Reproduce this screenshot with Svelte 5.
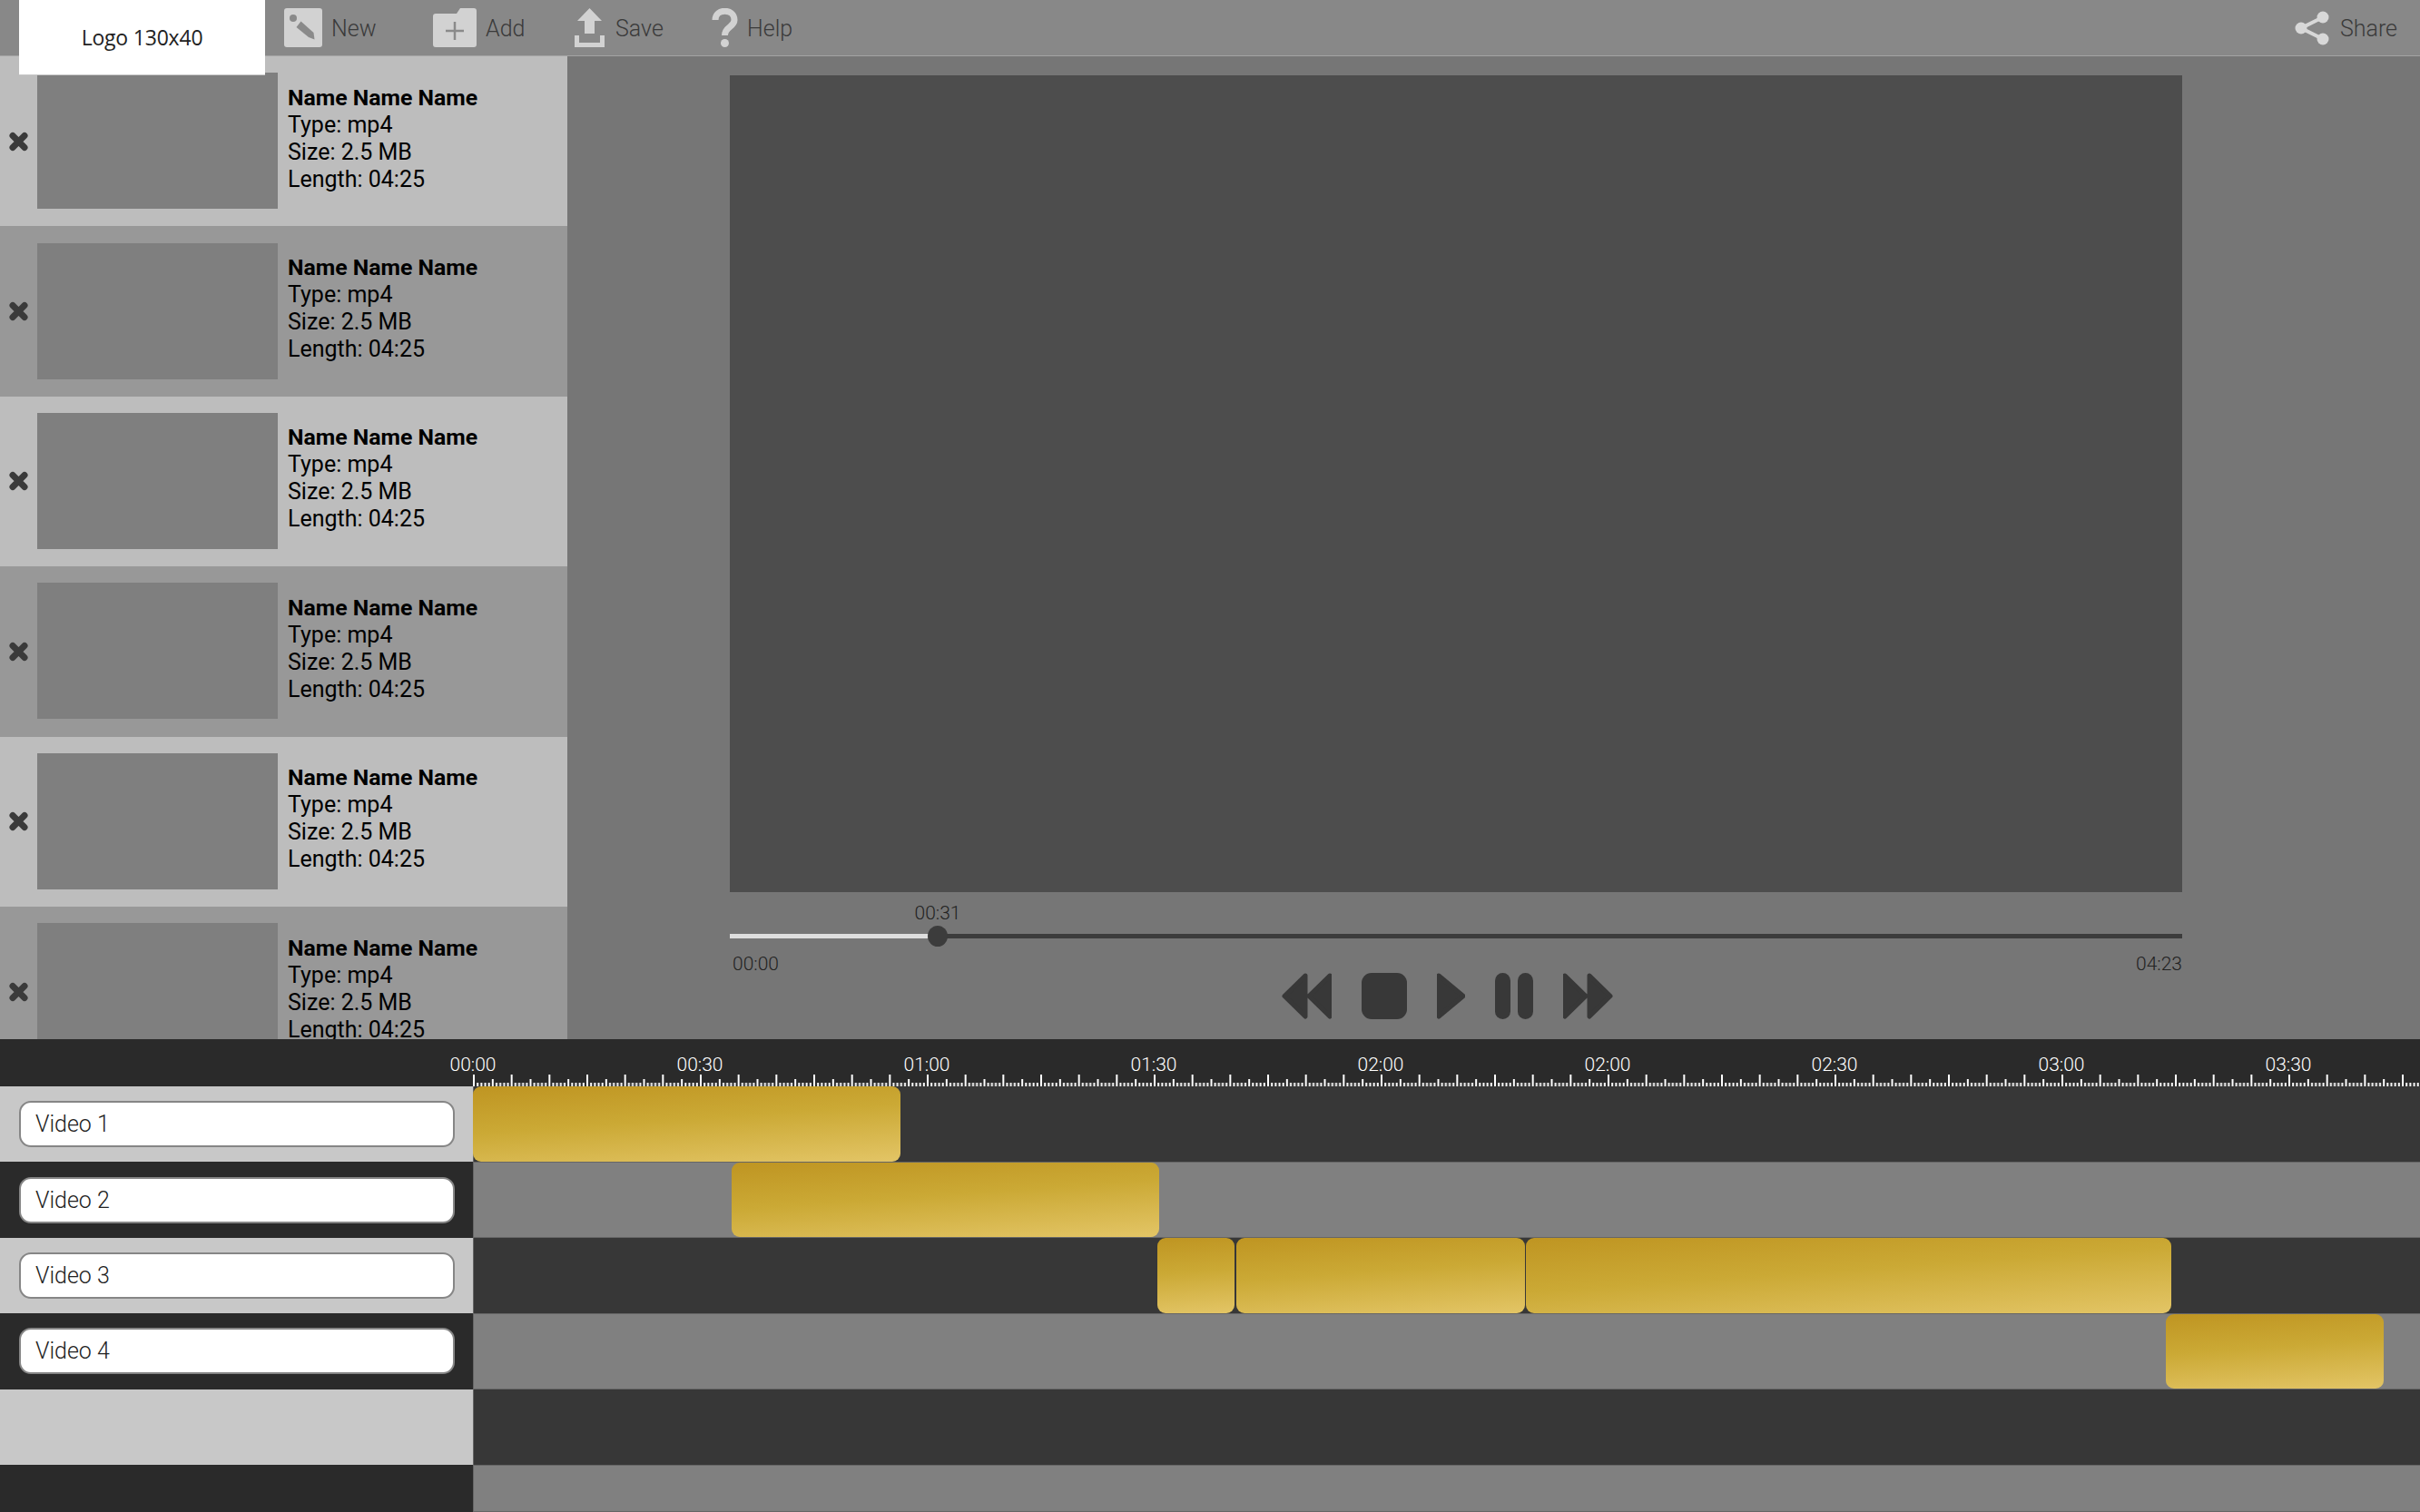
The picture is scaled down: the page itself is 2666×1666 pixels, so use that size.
<script>
  const files = Array.from({ length: 6 }, (_, i) => i);
  const tracks = [
    { name: 'Video 1', clips: [[-1, 471]] },
    { name: 'Video 2', clips: [[284, 471]] },
    { name: 'Video 3', clips: [[753, 85], [840, 318], [1159, 711]] },
    { name: 'Video 4', clips: [[1864, 240]] },
    { name: '', clips: [] },
    { name: null, clips: [] }
  ];
  const labels = ['00:00', '00:30', '01:00', '01:30', '02:00', '02:00', '02:30', '03:00', '03:30'];
  const minor = Array.from({ length: 10 }, (_, i) => i);
  const progress = (229 / 1600) * 100;
</script>

<div class="app">
  <header class="topbar">
    <div class="logo">Logo 130x40</div>
    <nav class="tools">
      <button class="tool new">
        <svg width="42" height="43" viewBox="0 0 42 43">
          <rect x="0" y="0" width="42" height="43" rx="3" fill="#d2d2d2" />
          <circle cx="10" cy="11" r="4" fill="#8a8a8a" />
          <path d="M13.5 21 L18.5 14.5 L32.5 27 L33.5 34.5 L27 32 Z" fill="#8a8a8a" />
        </svg>
        <span>New</span>
      </button>
      <button class="tool add">
        <svg width="48" height="43" viewBox="0 0 48 43">
          <path d="M3 6 H26 L30 0 H45 Q48 0 48 3 V40 Q48 43 45 43 H3 Q0 43 0 40 V9 Q0 6 3 6 Z" fill="#d2d2d2" />
          <path d="M24 15 V35 M14 25 H34" stroke="#8a8a8a" stroke-width="2.5" />
        </svg>
        <span>Add</span>
      </button>
      <button class="tool save">
        <svg width="33" height="43" viewBox="0 0 33 43">
          <path d="M16.5 0 L30 14 H22 V28 H11 V14 H3 Z" fill="#d2d2d2" />
          <path d="M0 30 H5 V38 H28 V30 H33 V43 H0 Z" fill="#d2d2d2" />
        </svg>
        <span class="save-label">Save</span>
      </button>
      <button class="tool help">
        <svg width="29" height="43" viewBox="0 0 29 43">
          <path d="M4 13 C4 0 25 0 25 13 C25 21 14.500 20 14.500 30" fill="none" stroke="#d2d2d2" stroke-width="7" />
          <circle cx="14.500" cy="38.500" r="4.500" fill="#d2d2d2" />
        </svg>
        <span>Help</span>
      </button>
    </nav>
    <button class="tool share">
      <svg width="38" height="38" viewBox="0 0 38 38">
        <path d="M31 7 L7 19 L31 31" fill="none" stroke="#d8d8d8" stroke-width="4" />
        <circle cx="31" cy="7" r="6.5" fill="#d8d8d8" />
        <circle cx="7" cy="19" r="6.5" fill="#d8d8d8" />
        <circle cx="31" cy="31" r="6.5" fill="#d8d8d8" />
      </svg>
      <span>Share</span>
    </button>
  </header>

  <div class="middle">
    <aside class="files">
      {#each files as i}
        <div class="file" class:alt={i % 2 === 1}>
          <svg class="remove" width="22" height="22" viewBox="0 0 22 22">
            <path d="M4.500 4.500 L17.500 17.500 M17.500 4.500 L4.500 17.500" stroke="#3a3a3a" stroke-width="7" stroke-linecap="round" />
          </svg>
          <div class="thumb"></div>
          <div class="meta">
            <strong>Name Name Name</strong>
            <span>Type: mp4</span>
            <span>Size: 2.5 MB</span>
            <span>Length: 04:25</span>
          </div>
        </div>
      {/each}
    </aside>

    <main class="player">
      <div class="video"></div>
      <div class="seek">
        <span class="now" style="left: {progress}%">00:31</span>
        <div class="rail">
          <div class="done" style="width: {progress}%"></div>
          <div class="knob" style="left: {progress}%"></div>
        </div>
        <div class="times">
          <span>00:00</span>
          <span>04:23</span>
        </div>
      </div>
      <div class="transport">
        <svg width="55" height="51" viewBox="0 0 55 51">
          <path d="M26 3 L3 25.5 L26 48 Z M53 3 L30 25.5 L53 48 Z" />
        </svg>
        <svg width="50" height="51" viewBox="0 0 50 51">
          <rect x="0" y="0" width="50" height="51" rx="11" />
        </svg>
        <svg width="31" height="51" viewBox="0 0 31 51">
          <path d="M2 3 L29 25.5 L2 48 Z" />
        </svg>
        <svg width="42" height="51" viewBox="0 0 42 51">
          <rect x="0" y="0" width="17" height="51" rx="8.5" />
          <rect x="25" y="0" width="17" height="51" rx="8.5" />
        </svg>
        <svg width="55" height="51" viewBox="0 0 55 51">
          <path d="M2 3 L25 25.5 L2 48 Z M29 3 L52 25.5 L29 48 Z" />
        </svg>
      </div>
    </main>
  </div>

  <section class="timeline">
    <div class="ruler">
      <div class="ruler-head"></div>
      <div class="scale">
        {#each labels as label, i}
          <span class="stamp" style="left: {i * 250}px">{label}</span>
        {/each}
        <svg class="ticks" width="2145" height="14">
          <defs>
            <pattern id="ticks" width="41.667" height="14" patternUnits="userSpaceOnUse">
              {#each minor as m}
                <rect
                  x={m * 4.1667}
                  y={m === 0 ? 1 : m === 5 ? 6 : 10}
                  width="2"
                  height={m === 0 ? 13 : m === 5 ? 8 : 4}
                  fill="#fff"
                />
              {/each}
            </pattern>
          </defs>
          <rect width="2145" height="14" fill="url(#ticks)" />
        </svg>
      </div>
    </div>

    {#each tracks as track, i}
      <div class="row" class:last={track.name === null}>
        <div class="head" class:alt={i % 2 === 1}>
          {#if track.name}
            <input value={track.name} readonly />
          {/if}
        </div>
        <div class="track" class:alt={i % 2 === 1}>
          {#each track.clips as [left, width]}
            <div class="clip" style="left: {left}px; width: {width}px"></div>
          {/each}
        </div>
      </div>
    {/each}
  </section>
</div>

<style>
  :global(body) {
    margin: 0;
    background: #767676;
  }
  .app {
    width: 2666px;
    height: 1666px;
    display: flex;
    flex-direction: column;
    overflow: hidden;
    font-family: Roboto, "Liberation Sans", sans-serif;
  }

  .topbar {
    height: 61px;
    flex: none;
    display: flex;
    align-items: flex-start;
    background: #888888;
    border-bottom: 1px solid #a4a4a4;
    position: relative;
    z-index: 2;
  }
  .logo {
    width: 271px;
    height: 83px;
    margin-left: 21px;
    flex: none;
    display: flex;
    align-items: center;
    justify-content: center;
    background: #fff;
    border-bottom: 1px solid #c8c8c8;
    box-sizing: border-box;
    font-family: "Open Sans", sans-serif;
    font-size: 23px;
    letter-spacing: -0.2px;
    color: #222;
  }
  .tools {
    display: flex;
    margin-left: 21px;
  }
  .tool {
    display: flex;
    align-items: center;
    gap: 10px;
    height: 61px;
    padding: 0;
    border: none;
    background: none;
    font-family: inherit;
    font-size: 25px;
    font-weight: 300;
    color: #3a3a3a;
  }
  .tool span {
    padding-top: 2px;
  }
  .tool .save-label {
    margin-left: 2px;
  }
  .new { width: 164px; }
  .add { width: 156px; }
  .save { width: 151px; }
  .share {
    margin-left: auto;
    margin-right: 25px;
    gap: 12px;
  }

  .middle {
    flex: 1;
    min-height: 0;
    display: flex;
  }
  .files {
    width: 625px;
    flex: none;
    overflow: hidden;
  }
  .file {
    height: 187.4px;
    display: flex;
    align-items: center;
    background: #bdbdbd;
  }
  .file.alt {
    background: #989898;
  }
  .remove {
    width: 41px;
    flex: none;
  }
  .thumb {
    width: 265px;
    height: 150px;
    margin-top: -1px;
    flex: none;
    background: #7f7f7f;
  }
  .meta {
    margin: -6px 0 0 11px;
    display: flex;
    flex-direction: column;
    font-size: 25px;
    line-height: 30px;
    color: #000;
  }
  .meta strong {
    font-weight: 700;
    font-size: 24.800px;
  }

  .player {
    flex: 1;
    display: flex;
    flex-direction: column;
    padding: 21px 0 0 179px;
    background: #767676;
    box-sizing: border-box;
  }
  .video {
    width: 1600px;
    height: 900px;
    flex: none;
    background: #4d4d4d;
  }
  .seek {
    width: 1600px;
    height: 89px;
    flex: none;
    position: relative;
    padding-top: 46px;
    box-sizing: border-box;
  }
  .now {
    position: absolute;
    top: 11px;
    transform: translateX(-50%);
    font-size: 21px;
    font-weight: 300;
    color: #222;
  }
  .rail {
    height: 5px;
    position: relative;
    background: #3c3c3c;
  }
  .done {
    height: 100%;
    background: #dedede;
  }
  .knob {
    position: absolute;
    top: -9px;
    width: 22px;
    height: 23px;
    margin-left: -11px;
    border-radius: 50%;
    background: #3c3c3c;
  }
  .times {
    display: flex;
    justify-content: space-between;
    padding: 16px 0 0 3px;
    font-size: 21px;
    font-weight: 300;
    color: #222;
  }
  .transport {
    width: 1580px;
    display: flex;
    gap: 33px;
    justify-content: center;
  }
  .transport svg {
    display: block;
    fill: #383838;
    stroke: #383838;
    stroke-width: 0;
  }
  .transport path {
    stroke-width: 5px;
    stroke-linejoin: round;
  }

  .timeline {
    height: 521px;
    flex: none;
    display: flex;
    flex-direction: column;
    background: #2a2a2a;
    position: relative;
  }
  .ruler {
    height: 52px;
    flex: none;
    display: flex;
  }
  .ruler-head {
    width: 521px;
    flex: none;
  }
  .scale {
    flex: 1;
    position: relative;
  }
  .stamp {
    position: absolute;
    top: 16px;
    transform: translateX(-50%);
    font-size: 21px;
    font-weight: 300;
    color: #fff;
  }
  .ticks {
    position: absolute;
    left: 0;
    bottom: 0;
    display: block;
  }
  .row {
    height: 83.4px;
    flex: none;
    display: flex;
  }
  .row.last {
    flex: 1;
  }
  .head {
    width: 521px;
    flex: none;
    display: flex;
    align-items: center;
    padding-left: 21px;
    box-sizing: border-box;
    background: #c8c8c8;
  }
  .head.alt {
    background: #2a2a2a;
  }
  .head input {
    width: 480px;
    height: 51px;
    padding: 0 0 0 16px;
    box-sizing: border-box;
    border: 2px solid #868686;
    border-radius: 13px;
    outline: none;
    background: #fff;
    font-family: inherit;
    font-size: 25px;
    font-weight: 300;
    color: #222;
  }
  .track {
    flex: 1;
    position: relative;
    background: #373737;
    border-left: 1px solid #666;
    box-sizing: border-box;
  }
  .track.alt {
    background: #808080;
    border-top: 1px solid #666;
    border-bottom: 1px solid #666;
  }
  .clip {
    position: absolute;
    top: 0;
    bottom: 0;
    border-radius: 9px;
    background: linear-gradient(176deg, #bf9522 0%, #cba935 45%, #e3c566 100%);
  }
</style>
